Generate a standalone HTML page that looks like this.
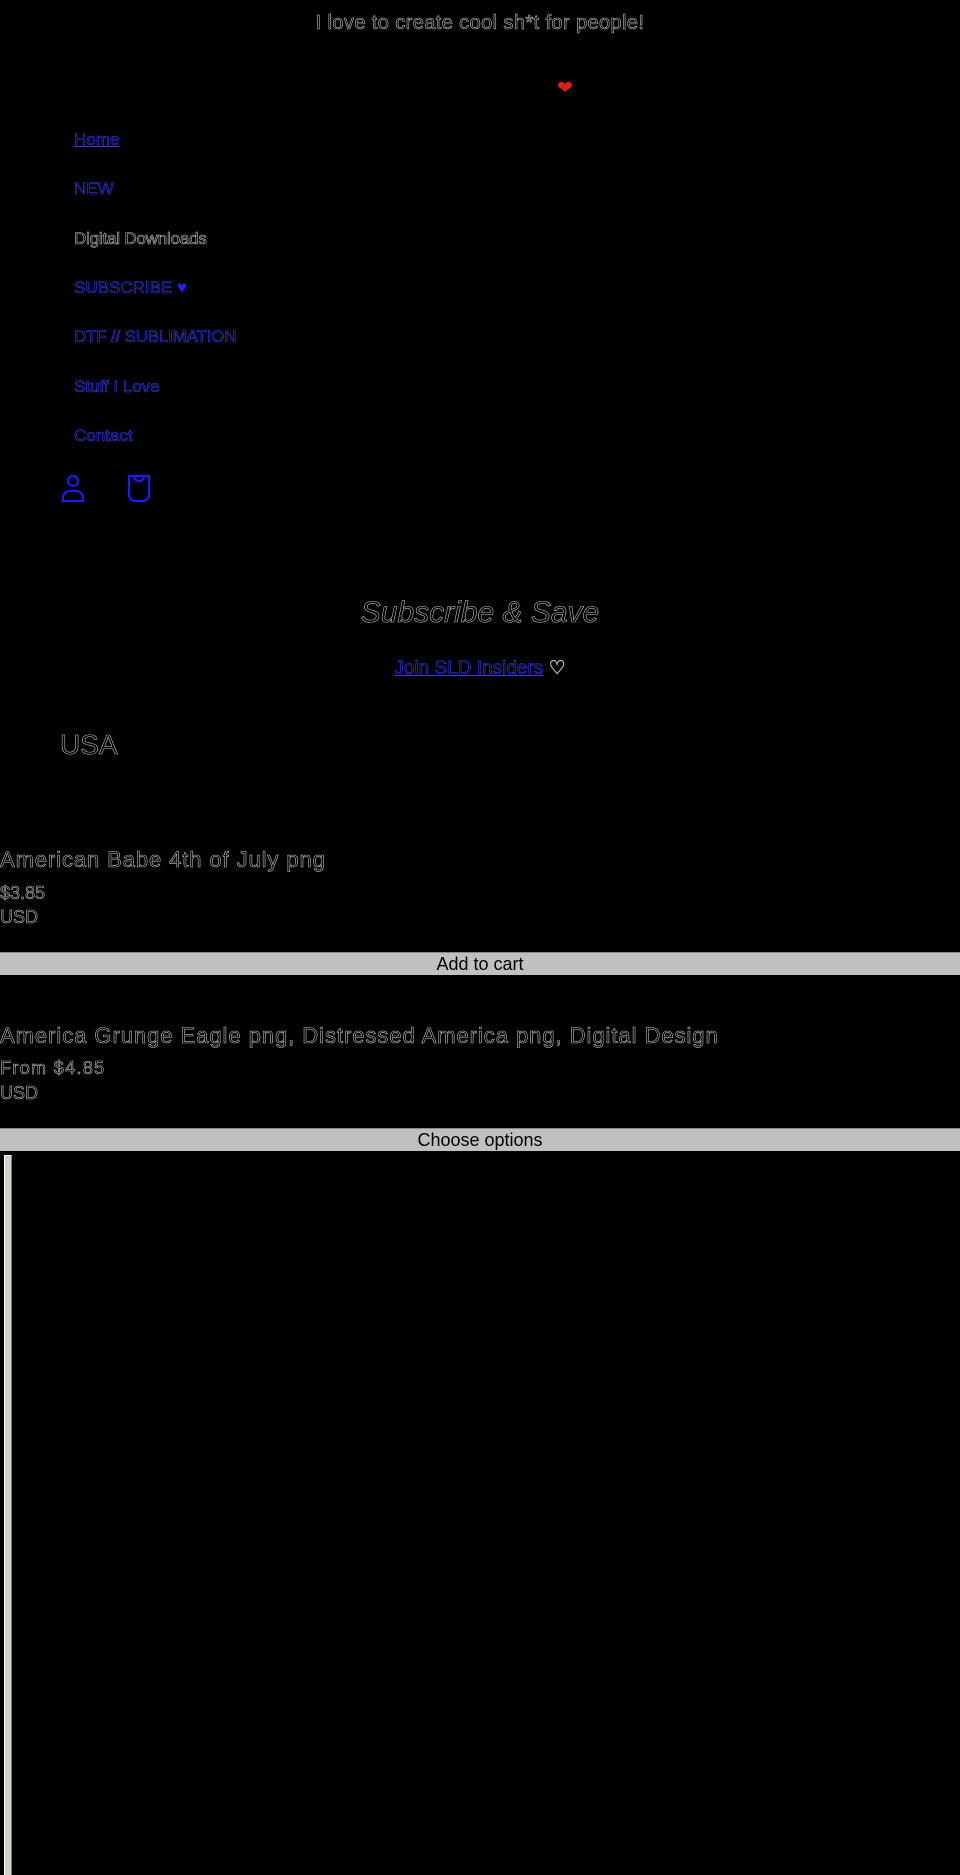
<!DOCTYPE html>
<html><head><meta charset="utf-8"><style>
html,body{margin:0;padding:0;background:#000;width:960px;height:1875px;overflow:hidden;position:relative;font-family:"Liberation Sans",sans-serif}
.t{position:absolute;white-space:nowrap;line-height:1;color:#000;-webkit-text-stroke:0.6px #bdbdbd}
.b{-webkit-text-stroke:0.6px #3a3aff;color:#000}
.btn{position:absolute;left:0;width:960px;height:22px;background:#c0c0c0;border-top:1px solid #888;color:#000;font-size:18px;text-align:center;line-height:22px}
</style></head><body>
<div class="t" style="left:0;width:960px;text-align:center;top:13px;font-size:20px;letter-spacing:0.4px">I love to create cool sh*t for people!</div>
<div style="position:absolute;left:557px;top:79px;color:#e21b1b;font-size:19px;line-height:1">&#10084;</div>
<div class="t b" style="left:74px;top:131px;font-size:17px;text-decoration:underline;text-decoration-color:#3a3aff">Home</div>
<div class="t b" style="left:74px;top:180px;font-size:17px">NEW</div>
<div class="t" style="left:74px;top:230px;font-size:17px;letter-spacing:-0.2px">Digital Downloads</div>
<div class="t b" style="left:74px;top:279px;font-size:17px">SUBSCRIBE <span style="color:#2020ff;-webkit-text-stroke:0">&#9829;</span></div>
<div class="t b" style="left:74px;top:328px;font-size:17px;letter-spacing:-0.2px">DTF // SUBLIMATION</div>
<div class="t b" style="left:74px;top:378px;font-size:17px">Stuff I Love</div>
<div class="t b" style="left:74px;top:427px;font-size:17px">Contact</div>
<svg style="position:absolute;left:60px;top:473px" width="26" height="30" viewBox="0 0 26 30" fill="none" stroke="#1a1aff" stroke-width="2.2"><circle cx="13" cy="8" r="5"/><path d="M3 28v-3a7 7 0 0 1 7-7h6a7 7 0 0 1 7 7v3z"/></svg>
<svg style="position:absolute;left:126px;top:473px" width="26" height="30" viewBox="0 0 26 30" fill="none" stroke="#1a1aff" stroke-width="2.2"><path d="M3 3h20v19a6 6 0 0 1-6 6H9a6 6 0 0 1-6-6z"/><path d="M8 3a5 5 0 0 0 10 0"/></svg>
<div class="t" style="left:0;width:960px;text-align:center;top:598px;font-size:30px;font-style:italic">Subscribe &amp; Save</div>
<div class="t" style="left:0;width:960px;text-align:center;top:659px;font-size:19px"><span class="b" style="text-decoration:underline;text-decoration-color:#3a3aff">Join SLD Insiders</span> &#9825;</div>
<div class="t" style="left:60px;top:731px;font-size:28px">USA</div>
<div class="t" style="left:0;top:849px;font-size:22px;letter-spacing:0.9px">American Babe 4th of July png</div>
<div class="t" style="left:0;top:884px;font-size:18px">$3.85</div>
<div class="t" style="left:0;top:908px;font-size:18px">USD</div>
<div class="btn" style="top:952px">Add to cart</div>
<div class="t" style="left:0;top:1025px;font-size:22px;letter-spacing:0.95px">America Grunge Eagle png, Distressed America png, Digital Design</div>
<div class="t" style="left:0;top:1059px;font-size:18px;letter-spacing:1.35px">From $4.85</div>
<div class="t" style="left:0;top:1084px;font-size:18px">USD</div>
<div class="btn" style="top:1128px">Choose options</div>
<div style="position:absolute;left:4px;top:1155px;width:6px;height:720px;background:#d4d0c8;border-top:1px solid #fff;border-left:1px solid #fff;border-right:1px solid #808080"></div>
</body></html>
